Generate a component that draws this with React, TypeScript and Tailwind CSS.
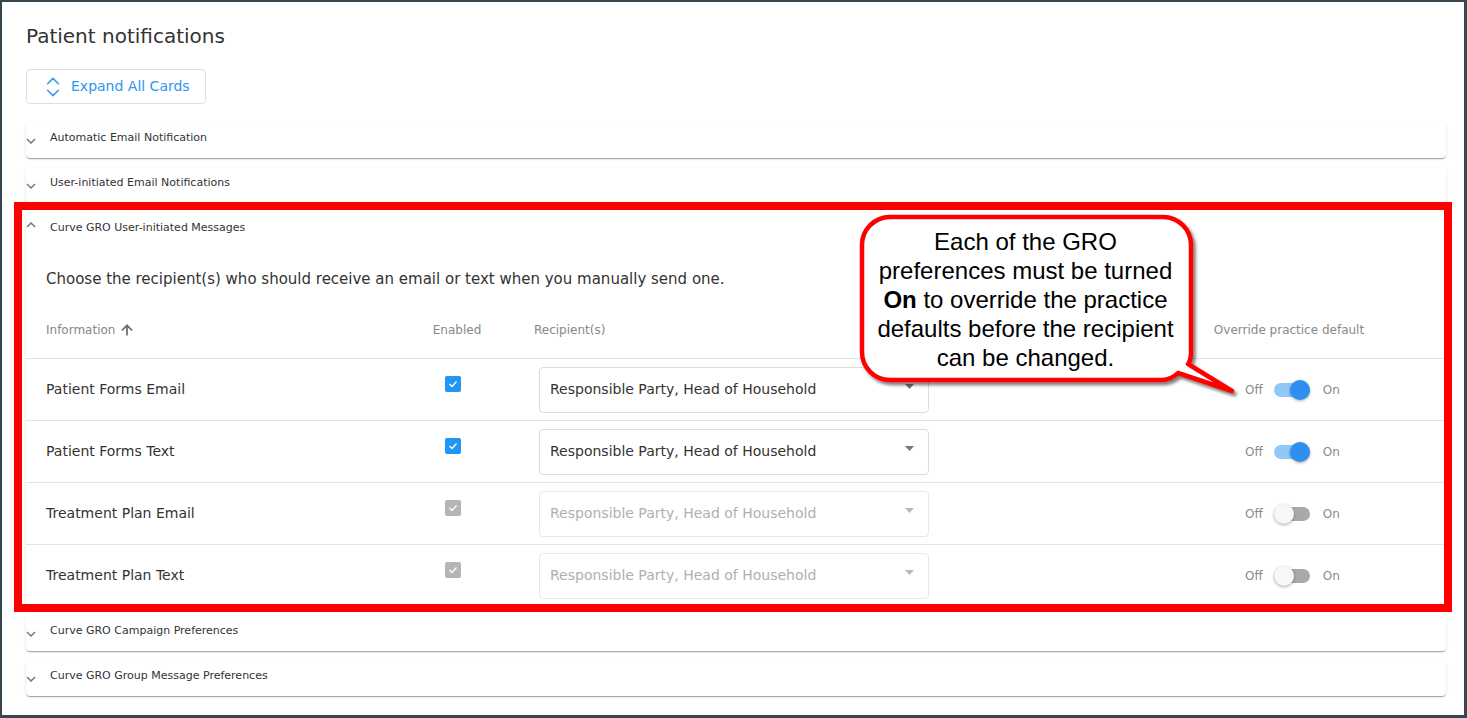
import { ArrowUp, ChevronsUpDown } from 'lucide-react';

type Row = {
  label: string;
  active: boolean;
};

const rows: Row[] = [
  { label: 'Patient Forms Email', active: true },
  { label: 'Patient Forms Text', active: true },
  { label: 'Treatment Plan Email', active: false },
  { label: 'Treatment Plan Text', active: false },
];

function Chevron({ up = false }: { up?: boolean }) {
  return (
    <svg width="10" height="6" viewBox="0 0 10 6" className="block">
      <polyline
        points={up ? '1,5 5,1 9,5' : '1,1 5,5 9,1'}
        fill="none"
        stroke="#777"
        strokeWidth="1.5"
      />
    </svg>
  );
}

function CardHeader({ title, open = false }: { title: string; open?: boolean }) {
  return (
    <div className="flex h-[35px]">
      <div className={open ? 'w-6 pt-[9px]' : 'w-6 pt-[15px]'}>
        <Chevron up={open} />
      </div>
      <span className="pt-[8px] text-[11px] leading-[14px] text-[#333]">{title}</span>
    </div>
  );
}

const cardCls =
  'rounded-[4px] bg-white shadow-[0_2px_1px_-1px_rgba(0,0,0,0.2),0_1px_1px_0_rgba(0,0,0,0.14),0_1px_3px_0_rgba(0,0,0,0.12)]';

function Checkbox({ active }: { active: boolean }) {
  return (
    <div
      className={`mb-3 mr-2 flex h-4 w-4 items-center justify-center rounded-[2px] ${
        active ? 'bg-[#2196f3]' : 'bg-[#b5b5b5]'
      }`}
    >
      <svg width="10" height="8" viewBox="0 0 10 8">
        <polyline points="1.5,4 4,6.5 8.5,1.5" fill="none" stroke="#fff" strokeWidth="1.3" />
      </svg>
    </div>
  );
}

function Select({ active }: { active: boolean }) {
  return (
    <div
      className={`relative ml-[5px] flex h-[46px] w-[390px] items-center rounded-[4px] border pl-[10px] text-[14px] ${
        active ? 'border-[#dcdcdc] text-[#333]' : 'border-[#e8e8e8] text-[#b0b0b0]'
      }`}
    >
      Responsible Party, Head of Household
      <svg
        width="9"
        height="5"
        viewBox="0 0 9 5"
        className="absolute right-[14px] top-[16px]"
      >
        <polygon points="0,0 9,0 4.5,5" fill={active ? '#757575' : '#b8b8b8'} />
      </svg>
    </div>
  );
}

function Toggle({ on }: { on: boolean }) {
  return (
    <div className="ml-[7px] flex items-center text-[12px] text-[#8a8a8a]">
      <span>Off</span>
      <div
        className={`relative ml-[11px] mr-[13px] h-[14px] w-9 rounded-full ${
          on ? 'bg-[#90c8f8]' : 'bg-[#a9a9a9]'
        }`}
      >
        <div
          className={`absolute top-[-3px] h-5 w-5 rounded-full shadow-[0_1px_3px_rgba(0,0,0,0.35)] ${
            on ? 'right-0 bg-[#2f8ff0]' : 'left-0 bg-[#f7f7f7]'
          }`}
        />
      </div>
      <span>On</span>
    </div>
  );
}

export default function App() {
  return (
    <div
      className="relative h-[718px] w-[1467px] overflow-hidden border-b-[3px] border-l-2 border-r-[3px] border-t-2 border-[#37474f] bg-white pl-6 pr-[18px] pt-[20px]"
      style={{ fontFamily: '"DejaVu Sans", Verdana, sans-serif' }}
    >
      <h1 className="text-[20px] leading-[28px] text-[#333]">Patient notifications</h1>

      <button className="mt-[19px] flex h-[35px] w-[180px] items-center rounded-[4px] border border-[#e0e0e0] pl-[13px] text-[14px] text-[#2e96f0]">
        <ChevronsUpDown size={26} strokeWidth={1.5} className="text-[#3d9af0]" />
        <span className="ml-[5px]">Expand All Cards</span>
      </button>

      <div className="mt-[19px] flex flex-col gap-[10px]">
        <div className={cardCls}>
          <CardHeader title="Automatic Email Notification" />
        </div>
        <div className={cardCls}>
          <CardHeader title="User-initiated Email Notifications" />
        </div>

        <div className={cardCls}>
          <CardHeader title="Curve GRO User-initiated Messages" open />
          <p className="mt-[21px] pl-5 text-[15px] leading-[20px] text-[#333]">
            Choose the recipient(s) who should receive an email or text when you manually send one.
          </p>

          <div className="mt-[13px] flex h-[56px] items-center text-[12px] text-[#888]">
            <div className="flex w-[381px] items-center pl-5">
              Information
              <ArrowUp size={16} strokeWidth={2.5} className="ml-[4px] text-[#666]" />
            </div>
            <div className="w-[100px] text-center">Enabled</div>
            <div className="w-[27px]" />
            <div className="w-[420px]">Recipient(s)</div>
            <div className="ml-auto mr-[57px] w-[200px] text-center">Override practice default</div>
          </div>

          {rows.map((r) => (
            <div key={r.label} className="flex h-[62px] items-center border-t border-[#e3e3e3]">
              <div className="w-[381px] pl-5 text-[14px] text-[#333]">{r.label}</div>
              <div className="flex w-[100px] justify-center">
                <Checkbox active={r.active} />
              </div>
              <div className="w-[27px]" />
              <div className="w-[420px]">
                <Select active={r.active} />
              </div>
              <div className="ml-auto mr-[57px] flex w-[200px] justify-center">
                <Toggle on={r.active} />
              </div>
            </div>
          ))}
        </div>

        <div className={cardCls}>
          <CardHeader title="Curve GRO Campaign Preferences" />
        </div>
        <div className={cardCls}>
          <CardHeader title="Curve GRO Group Message Preferences" />
        </div>
      </div>

      {/* annotation: red highlight box */}
      <div className="pointer-events-none absolute left-[12px] top-[200px] h-[410px] w-[1438px] border-[8px] border-[#ff0000]" />

      {/* annotation: speech bubble */}
      <svg
        width="400"
        height="200"
        viewBox="848 203 400 200"
        className="pointer-events-none absolute left-[846px] top-[201px]"
      >
        <defs>
          <filter id="bubbleShadow" x="-10%" y="-10%" width="120%" height="130%">
            <feDropShadow dx="2.5" dy="3" stdDeviation="1.5" floodColor="#000" floodOpacity="0.5" />
          </filter>
        </defs>
        <path
          d="M 890 217 H 1163 A 28 28 0 0 1 1191 245 V 352 Q 1191 360 1188 364 L 1232 391 L 1178 373 Q 1172 379 1163 380 H 890 A 28 28 0 0 1 862 352 V 245 A 28 28 0 0 1 890 217 Z"
          fill="#fff"
          stroke="#ff0000"
          strokeWidth="4.5"
          strokeLinejoin="round"
          filter="url(#bubbleShadow)"
        />
      </svg>
      <div
        className="pointer-events-none absolute left-[858px] top-[215px] flex h-[165px] w-[331px] items-center justify-center text-center text-[24px] leading-[29px] text-black"
        style={{ fontFamily: '"Liberation Sans", Arial, sans-serif' }}
      >
        <p>
          Each of the GRO
          <br />
          preferences must be turned
          <br />
          <b>On</b> to override the practice
          <br />
          defaults before the recipient
          <br />
          can be changed.
        </p>
      </div>
    </div>
  );
}
